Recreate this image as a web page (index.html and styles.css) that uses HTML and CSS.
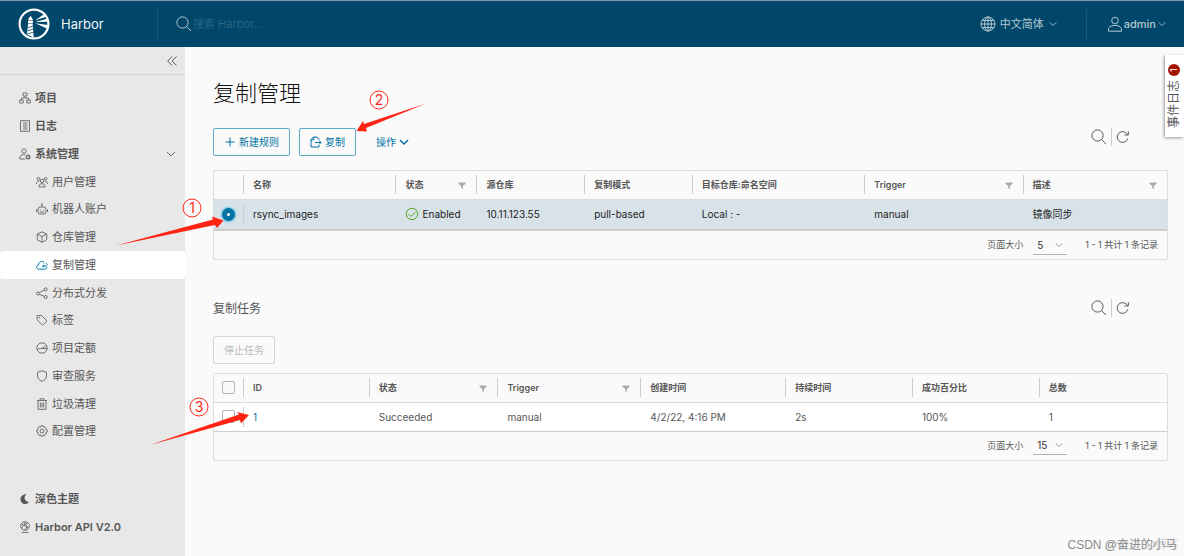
FILE: index.html
```html
<!DOCTYPE html>
<html lang="zh-CN">
<head>
<meta charset="utf-8">
<meta name="viewport" content="width=device-width, initial-scale=1">
<title>Harbor</title>
<link rel="stylesheet" href="styles.css">
</head>
<body>
<svg class="sprite" aria-hidden="true">
  <symbol id="i-search" viewBox="0 0 18 18"><circle cx="7.5" cy="7.5" r="5.6"/><path d="M11.6 11.6l4.4 4.4"/></symbol>
  <symbol id="i-refresh" viewBox="0 0 18 18"><path d="M13.800 10.400a5.400 5.400 0 1 1-1.200-5l1.400 1.400M14.300 3.200v3.800h-3.800"/></symbol>
  <symbol id="i-down" viewBox="0 0 12 12"><path d="M2 4l4 4 4-4"/></symbol>
  <symbol id="i-filter" viewBox="0 0 10 10"><path d="M1.500 2.500h7v1.200L5.900 6v3l-1.700-.9V6L1.500 3.700z"/></symbol>
</svg>
<header class="topbar">
  <a class="brand" href="#">
    <svg class="logo" viewBox="0 0 32 32" aria-hidden="true">
      <circle cx="16" cy="16" r="14.400" fill="none" stroke="#fff" stroke-width="2.200"/>
      <path fill="#fff" d="M10 13h5v2h-5zM10.300 11l2.200-3.200 2.200 3.200v1.500h-4.400zM10.300 15.500h4.400l1 14-7-3z"/>
      <path stroke="#00476b" stroke-width=".8" d="M9.500 20l5.800-2M9.300 23l6.200-2M9 26l7-2"/>
      <path fill="#fff" d="M17 12.500L27 5.500l1.800 3zM17.200 14L30 10.600v3.200zM17.200 15.300L30 17v4z"/>
    </svg>
    <span>Harbor</span>
  </a>
  <label class="search">
    <svg class="icon i18"><use href="#i-search"/></svg>
    <input type="search" placeholder="搜索 Harbor..." aria-label="搜索 Harbor">
  </label>
  <button class="top-btn lang" type="button">
    <svg class="icon i16" viewBox="0 0 16 16"><circle cx="8" cy="8" r="7"/><ellipse cx="8" cy="8" rx="3.500" ry="7"/><path d="M8 1v14M1 8h14M2 4.500h12M2 11.500h12"/></svg>
    <span>中文简体</span>
    <svg class="icon i10"><use href="#i-down"/></svg>
  </button>
  <button class="top-btn user" type="button">
    <svg class="icon i16" viewBox="0 0 16 16"><circle cx="8" cy="4.500" r="3.300"/><path d="M1.500 15.200v-2.700c2-4.200 11-4.200 13 0v2.700z"/></svg>
    <span>admin</span>
    <svg class="icon i10"><use href="#i-down"/></svg>
  </button>
</header>

<div class="layout">
  <nav class="sidebar">
    <button class="collapse" type="button" aria-label="收起"><svg class="icon i12" viewBox="0 0 12 12"><path d="M6 1.500L1.700 6 6 10.500M10.500 1.500L6.200 6l4.300 4.500"/></svg></button>
    <ul class="menu">
      <li><a class="item strong" href="#"><svg class="icon i12" viewBox="0 0 12 12"><path d="M4 1h4v3H4zM.700 8h3.500v3H.7zM7.800 8h3.500v3H7.800zM6 4v2M2.500 8V6h7v2"/></svg>项目</a></li>
      <li><a class="item strong" href="#"><svg class="icon i12" viewBox="0 0 12 12"><path d="M1.500.700h9v10.600h-9zM4 3h4.500M4 5h4.500M4 7h4.500M4 9h4.500"/></svg>日志</a></li>
      <li>
        <a class="item strong" href="#"><svg class="icon i12" viewBox="0 0 12 12"><circle cx="5" cy="3" r="2.200"/><path d="M6 11H.8V9C1.500 7 4 6.200 6 6.600"/><circle cx="9" cy="9" r="1.700" stroke-width="1.600"/></svg><span>系统管理</span><svg class="icon i12 end"><use href="#i-down"/></svg></a>
        <ul class="submenu">
          <li><a class="item" href="#"><svg class="icon i12" viewBox="0 0 12 12"><circle cx="6" cy="5" r="1.700"/><circle cx="2.500" cy="2.800" r="1.400"/><circle cx="9.500" cy="2.800" r="1.400"/><path d="M3 11V9.500c.5-2.300 5.500-2.300 6 0V11zM.7 8V6.500c.2-1 1.300-1.500 2.500-1.300M11.300 8V6.500c-.2-1-1.300-1.500-2.500-1.300"/></svg>用户管理</a></li>
          <li><a class="item" href="#"><svg class="icon i12" viewBox="0 0 12 12"><rect x="2" y="4" width="8" height="7" rx="2"/><path d="M6 4V1.500M.5 6.500v2.500M11.500 6.500v2.500M4 9h4M4.200 6.500v.8M7.800 6.500v.8"/><circle cx="6" cy="1.300" r=".6"/></svg>机器人账户</a></li>
          <li><a class="item" href="#"><svg class="icon i12" viewBox="0 0 12 12"><path d="M6 .8l4.700 2.300v5.700L6 11.300 1.300 8.800V3.100zM1.300 3.100L6 5.500l4.700-2.400M6 5.500v5.800"/></svg>仓库管理</a></li>
          <li><a class="item active" href="#" aria-current="page"><svg class="icon i12" viewBox="0 0 12 12"><path d="M8.500 10.200H2.800C-.2 10-.1 6.300 2.400 6.100 2.500 2 7.600 1.400 8.300 4.400M8.500 10.200c1.800 0 2.500-1 2.400-2.500M6.500 7h3.800M10.300 4.300l1.200 1.200-1.200 1.200M8 6L6.500 7 8 8.300"/></svg>复制管理</a></li>
          <li><a class="item" href="#"><svg class="icon i12" viewBox="0 0 12 12"><circle cx="2" cy="6.500" r="1.500"/><circle cx="9.700" cy="2.300" r="1.500"/><circle cx="9.700" cy="10" r="1.500"/><path d="M3.300 5.800l5-2.800M3.300 7.200l5 2.200"/></svg>分布式分发</a></li>
          <li><a class="item" href="#"><svg class="icon i12" viewBox="0 0 12 12"><path d="M1 1.500h4.500l5.500 5.400-4.300 4.300L1 5.800z"/><circle cx="3.300" cy="3.700" r=".5"/></svg>标签</a></li>
          <li><a class="item" href="#"><svg class="icon i12" viewBox="0 0 12 12"><circle cx="6" cy="6" r="5.200"/><path d="M1.200 8c1.300-2 3-1 4.800-1.500L9.500 4M6 6.500h5"/></svg>项目定额</a></li>
          <li><a class="item" href="#"><svg class="icon i12" viewBox="0 0 12 12"><path d="M6 .8l4.500 1.500V6c0 2.800-2 4.400-4.500 5.300C3.500 10.400 1.500 8.800 1.500 6V2.300z"/></svg>审查服务</a></li>
          <li><a class="item" href="#"><svg class="icon i12" viewBox="0 0 12 12"><path d="M1 2.500h10M2 2.500v8.800h8V2.500M4 2.500V.8h4v1.700M4.300 4.500v5M6 4.500v5M7.700 4.500v5"/></svg>垃圾清理</a></li>
          <li><a class="item" href="#"><svg class="icon i12" viewBox="0 0 12 12"><circle cx="6" cy="6" r="2"/><path d="M5 .7h2l.4 1.500 1.400-.7 1.500 1.500-.7 1.400 1.600.6v2l-1.600.5.7 1.500-1.500 1.400-1.400-.7-.4 1.600H5l-.5-1.600-1.500.7L1.600 9l.7-1.500L.8 7V5l1.500-.6L1.600 3 3 1.500l1.500.7z"/></svg>配置管理</a></li>
        </ul>
      </li>
    </ul>
    <ul class="menu bottom">
      <li><a class="item strong" href="#"><svg class="i12" viewBox="0 0 12 12"><path fill="#565656" d="M7.500 1.200C4.300 3.500 5 8.500 10 9.300 7 12.300 1.500 11 1.500 6.200c0-3 2.800-5.500 6-5z"/></svg>深色主题</a></li>
      <li><a class="item strong" href="#"><svg class="icon i12" viewBox="0 0 12 12"><circle cx="6" cy="5" r="4.300"/><path d="M2.500 3l7 4M3 7.500C3 5 5 3 8.500 2M5 1.200L8 5.500l-2 3.500M2.500 11.400h7"/></svg>Harbor API V2.0</a></li>
    </ul>
  </nav>

  <main class="content">
    <h1>复制管理</h1>
    <div class="toolbar">
      <div class="actions">
        <button class="btn" type="button"><svg class="icon i12" viewBox="0 0 12 12"><path d="M6 1.500v9M1.500 6h9"/></svg>新建规则</button>
        <button class="btn" type="button"><svg class="icon i12" viewBox="0 0 12 12"><path d="M9 4V3.500L7 1H3.500L1 3.500V11h8V9M3.800 1v2.800H1M5 6.500h6M9 4.500l2 2-2 2"/></svg>复制</button>
        <button class="btn plain" type="button">操作<svg class="icon i12 bold"><use href="#i-down"/></svg></button>
      </div>
      <div class="tools">
        <button type="button" aria-label="搜索规则"><svg class="icon i18"><use href="#i-search"/></svg></button>
        <button type="button" aria-label="刷新规则"><svg class="icon i18"><use href="#i-refresh"/></svg></button>
      </div>
    </div>
    <section class="grid rules">
      <table>
        <colgroup><col class="pick"><col class="name"><col class="state"><col class="source"><col class="mode"><col class="target"><col class="trigger"><col class="desc"></colgroup>
        <thead><tr>
          <th></th><th><div>名称</div></th><th><div>状态<svg class="filter"><use href="#i-filter"/></svg></div></th><th><div>源仓库</div></th><th><div>复制模式</div></th><th><div>目标仓库:命名空间</div></th><th><div>Trigger<svg class="filter"><use href="#i-filter"/></svg></div></th><th><div>描述<svg class="filter"><use href="#i-filter"/></svg></div></th>
        </tr></thead>
        <tbody><tr>
          <td class="pick-cell"><input type="radio" name="rule" checked aria-label="rsync_images"></td><td class="ruled"><div>rsync_images</div></td><td><div><svg class="ok" viewBox="0 0 14 14"><circle cx="7" cy="7" r="5.700"/><path d="M3.800 7.200l2.300 2.300 4.200-4.300"/></svg>Enabled</div></td><td><div>10.11.123.55</div></td><td><div>pull-based</div></td><td><div>Local : -</div></td><td><div>manual</div></td><td><div>镜像同步</div></td>
        </tr></tbody>
      </table>
      <footer><label for="size-rules">页面大小</label><span class="select"><select id="size-rules"><option>5</option></select><svg class="icon i10"><use href="#i-down"/></svg></span><span>1 - 1 共计 1 条记录</span></footer>
    </section>

    <div class="section-head">
      <h2>复制任务</h2>
      <div class="tools">
        <button type="button" aria-label="搜索任务"><svg class="icon i18"><use href="#i-search"/></svg></button>
        <button type="button" aria-label="刷新任务"><svg class="icon i18"><use href="#i-refresh"/></svg></button>
      </div>
    </div>
    <button class="btn stop" type="button" disabled>停止任务</button>
    <section class="grid tasks">
      <table>
        <colgroup><col class="pick"><col class="id"><col class="status"><col class="by"><col class="created"><col class="duration"><col class="rate"><col class="total"></colgroup>
        <thead><tr>
          <th class="pick-cell"><input type="checkbox" aria-label="全选"></th><th><div>ID</div></th><th><div>状态<svg class="filter"><use href="#i-filter"/></svg></div></th><th><div>Trigger<svg class="filter"><use href="#i-filter"/></svg></div></th><th><div>创建时间</div></th><th><div>持续时间</div></th><th><div>成功百分比</div></th><th><div>总数</div></th>
        </tr></thead>
        <tbody><tr>
          <td class="pick-cell"><input type="checkbox" aria-label="任务 1"></td><td class="ruled"><div><a href="#">1</a></div></td><td><div>Succeeded</div></td><td><div>manual</div></td><td><div>4/2/22, 4:16 PM</div></td><td><div>2s</div></td><td><div>100%</div></td><td><div>1</div></td>
        </tr></tbody>
      </table>
      <footer><label for="size-tasks">页面大小</label><span class="select"><select id="size-tasks"><option>15</option></select><svg class="icon i10"><use href="#i-down"/></svg></span><span>1 - 1 共计 1 条记录</span></footer>
    </section>
  </main>
</div>

<button class="event-tab" type="button"><span>事件日志</span><span class="count">1</span></button>

<svg class="notes" width="440" height="460" viewBox="0 0 440 460">
  <g class="rings"><circle cx="192" cy="208" r="9"/><circle cx="379" cy="100" r="9"/><circle cx="199" cy="407" r="9"/></g>
  <g class="digits"><text x="192" y="213">1</text><text x="379" y="105">2</text><text x="199" y="412">3</text></g>
  <g class="arrows">
    <path d="M116 245.500L213 219.500 212 216.500 223.500 220.500 217 228 215 225z"/>
    <path d="M426 103.500L364 124 363 121 356.500 131 367 131.500 366 128z"/>
    <path d="M150 445L239 414.500 237 412 249 415 241 423.500 240 420z"/>
  </g>
</svg>
<div class="mark faint">@51CTO博客</div>
<div class="mark">CSDN @奋进的小马</div>
</body>
</html>
```
FILE: styles.css
```css
* { box-sizing: border-box; }
body {
  margin: 0;
  min-height: 100vh;
  display: flex;
  flex-direction: column;
  position: relative;
  background: #fafafa;
  color: #565656;
  font: 11px/16px Inter, "Noto Sans CJK SC", sans-serif;
}
button, input, select { font: inherit; color: inherit; }
button { border: 0; padding: 0; background: none; cursor: pointer; }
a { color: inherit; text-decoration: none; }
ul { list-style: none; margin: 0; padding: 0; }
h1, h2 { margin: 0; }
.sprite { position: absolute; width: 0; height: 0; }
.icon { fill: none; stroke: currentColor; stroke-width: 1; flex: none; }
.i10 { width: 10px; height: 10px; }
.i12 { width: 12px; height: 12px; flex: none; }
.i16 { width: 16px; height: 16px; }
.i18 { width: 18px; height: 18px; }
.bold { stroke-width: 1.5; }

.topbar {
  height: 47px;
  display: flex;
  align-items: center;
  background: #00476b;
  border-top: 1px solid #7e98a5;
  color: #b4c7d1;
}
.brand {
  width: 158px;
  height: 31px;
  padding-left: 18px;
  display: flex;
  align-items: center;
  gap: 11px;
  border-right: 1px solid #1b5878;
  color: #f2f6f8;
  font-size: 13px;
}
.logo { width: 32px; height: 32px; }
.search { flex: 1; display: flex; align-items: center; padding-left: 17px; }
.search input { flex: 1; min-width: 0; border: 0; padding: 0; background: none; outline: 0; }
.search input::placeholder { color: #2b6482; opacity: 1; }
.top-btn { display: flex; align-items: center; height: 31px; }
.lang { gap: 4px; padding-right: 28px; }
.user { gap: 1px; padding: 0 17px 0 20px; border-left: 1px solid #1b5878; font-weight: 500; }

.layout { flex: 1; display: flex; }
.sidebar {
  width: 185px;
  flex: none;
  display: flex;
  flex-direction: column;
  background: #e8e8e8;
}
.collapse {
  height: 28px;
  padding-right: 7px;
  display: flex;
  align-items: center;
  justify-content: flex-end;
  border-bottom: 1px solid #d4d4d4;
}
.menu { padding-top: 9px; }
.menu .icon { color: #707070; }
.bottom { margin-top: auto; padding: 0 0 15px; }
.item {
  height: 28px;
  padding: 0 8px 0 19px;
  display: flex;
  align-items: center;
  gap: 4px;
}
.strong { font-weight: 600; }
.end { margin-left: auto; }
.submenu .item { padding-left: 36px; }
.submenu li:nth-child(4n+1) .item { height: 27px; }
.active { background: #fff; border-radius: 3px; }
.menu .active .icon { color: #0079ad; }

.content { flex: 1; min-width: 0; padding: 30px 16px 20px 28px; }
h1 { font-size: 22px; line-height: 32px; font-weight: 300; color: #111; }
h2 { font-size: 12px; line-height: 20px; font-weight: 400; }
.toolbar { display: flex; justify-content: space-between; margin: 19px 0 14px; }
.actions { display: flex; gap: 9px; }
.btn {
  height: 28px;
  padding: 0 10px;
  display: flex;
  align-items: center;
  gap: 3px;
  border: 1px solid #60aacb;
  border-radius: 2px;
  color: #0072a3;
  font-size: 10px;
}
.plain { border-color: transparent; gap: 2px; }
.tools { display: flex; height: 18px; margin-right: 36px; }
.tools button { padding: 0 3px; height: 18px; }
.tools button + button { border-left: 1px solid #ccc; padding: 0 0 0 2px; }

.grid { border: 1px solid #dcdcdc; border-radius: 2px; }
table { width: 100%; table-layout: fixed; border-collapse: collapse; }
th, td { padding: 0; text-align: left; }
th { height: 28px; font-size: 9px; font-weight: 600; }
th div { height: 19px; padding: 0 9px; display: flex; align-items: center; border-left: 1px solid #ccc; }
td { border-top: 1px solid #dcdcdc; border-bottom: 2px solid #ccc; height: 31px; font-size: 10px; }
td div { display: flex; align-items: center; gap: 3px; padding-left: 10px; white-space: nowrap; }
td.ruled div { height: 20px; padding-left: 9px; border-left: 1px solid #ccc; }
td a { color: #0072a3; }
.pick { width: 29px; }
.name { width: 16%; }
.state { width: 8.5%; }
.source, .mode { width: 11.3%; }
.target { width: 18.1%; }
.trigger { width: 16.6%; }
.id { width: 13.2%; }
.status { width: 13.5%; }
.by { width: 15%; }
.created { width: 15.2%; }
.duration, .rate { width: 13.3%; }
.pick-cell { text-align: center; }
.filter { width: 10px; height: 10px; margin-left: auto; fill: #aaa; }
.ok { width: 14px; height: 14px; fill: none; stroke: #5aa220; }
.rules tbody { background: #d8e3e9; color: #222; }
.tasks tbody { background: #fff; }
.tasks td { border-bottom-width: 1px; height: 29px; }
.grid input { appearance: none; display: block; margin: 0 auto; width: 13px; height: 13px; border: 1px solid #b3b3b3; border-radius: 2px; }
.grid input[type="radio"] { border: 5px solid #0072a3; border-radius: 50%; background: #fff; box-shadow: 0 0 2px 1px #6bc1e3; }
.grid footer { height: 28px; padding-right: 9px; display: flex; align-items: center; justify-content: flex-end; font-size: 9px; }
.select { display: flex; align-items: center; width: 34px; height: 19px; margin: 0 18px 0 10px; padding-right: 3px; border-bottom: 1px solid #b3b3b3; }
.select select { appearance: none; flex: 1; min-width: 0; border: 0; padding: 0 0 0 4px; background: none; color: #333; font-size: 10px; }
.select .icon { color: #8c8c8c; }
.section-head { display: flex; justify-content: space-between; margin: 39px 0 17px; }
.stop { margin-bottom: 9px; border-color: #d6d6d6; color: #b9b9b9; }

.event-tab {
  position: absolute;
  top: 55px;
  right: 0;
  width: 19px;
  height: 82px;
  padding-left: 1px;
  display: flex;
  align-items: center;
  justify-content: center;
  gap: 3px;
  writing-mode: vertical-rl;
  text-orientation: sideways;
  transform: rotate(180deg);
  background: #fff;
  box-shadow: 1px -1px 3px #999;
  font-size: 12px;
}
.count { width: 12px; height: 12px; border-radius: 50%; background: #a31300; color: #fff; font-size: 9px; line-height: 12px; text-align: center; }
.notes { position: absolute; top: 0; left: 0; pointer-events: none; }
.rings { fill: none; stroke: #ff2a1a; }
.digits { fill: #ff2a1a; font-size: 14px; text-anchor: middle; }
.arrows { fill: #ff2414; }
.mark { position: absolute; right: 7px; bottom: 3px; font: 12px/16px "Liberation Sans", "Noto Sans CJK SC", sans-serif; color: #8c8c8c; }
.faint { right: 5px; color: #dcdcdc; }
```
